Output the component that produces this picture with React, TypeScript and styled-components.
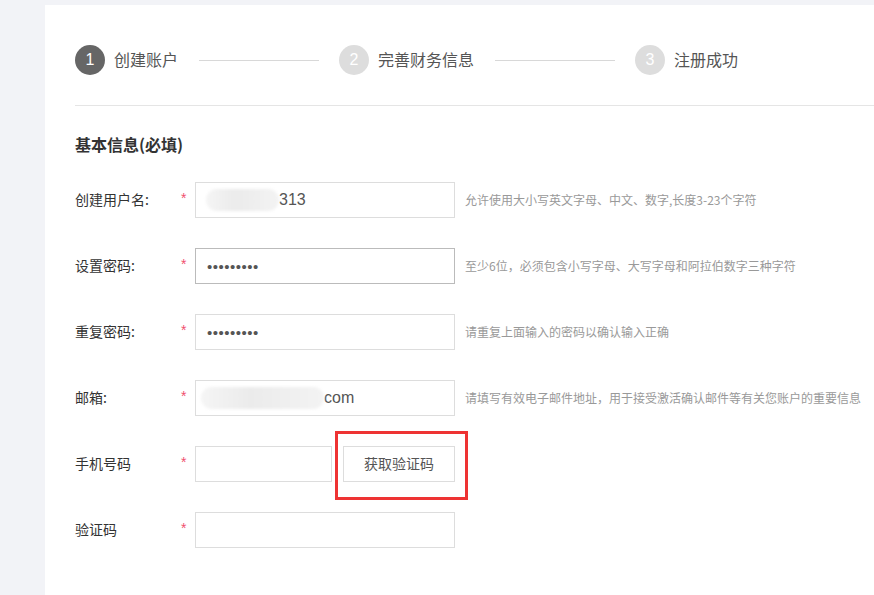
import React from "react";
import styled, { createGlobalStyle } from "styled-components";

const GlobalStyle = createGlobalStyle`
  html, body {
    margin: 0;
    padding: 0;
    background: #f2f3f7;
    font-family: "Liberation Sans", "Noto Sans CJK SC", sans-serif;
    overflow: hidden;
  }
`;

const Page = styled.div`
  width: 874px;
  height: 595px;
  padding: 5px 0 0 45px;
  box-sizing: border-box;
`;

const Panel = styled.div`
  background: #fff;
  height: 590px;
  padding: 40px 0 0 30px;
  box-sizing: border-box;
`;

const Steps = styled.div`
  display: flex;
  align-items: center;
  height: 30px;
`;

const Step = styled.div`
  display: flex;
  align-items: center;
  gap: 9px;
`;

const Circle = styled.span<{ $active?: boolean }>`
  width: 30px;
  height: 30px;
  border-radius: 50%;
  background: ${(p) => (p.$active ? "#666" : "#ddd")};
  color: #fff;
  font-size: 16px;
  display: flex;
  align-items: center;
  justify-content: center;
`;

const StepText = styled.span`
  font-size: 16px;
  color: #555;
  font-family: "Noto Sans CJK SC", sans-serif;
  line-height: 20px;
  margin-top: -2px;
`;

const StepLine = styled.span`
  width: 120px;
  height: 1px;
  background: #d8d8d8;
  margin: 0 20px 0 21px;
`;

const Divider = styled.div`
  height: 1px;
  background: #e5e5e5;
  margin-top: 30px;
`;

const Title = styled.h3`
  margin: 27px 0 0;
  font-size: 16px;
  font-weight: bold;
  color: #333;
  font-family: "Noto Sans CJK SC", sans-serif;
  line-height: 22px;
`;

const Form = styled.div`
  display: flex;
  flex-direction: column;
  gap: 30px;
  margin-top: 27px;
`;

const Row = styled.div`
  display: grid;
  grid-template-columns: 105px 15px max-content max-content;
  justify-content: start;
  align-items: center;
  height: 36px;
`;

const Label = styled.span`
  font-size: 14px;
  color: #333;
  font-family: "Noto Sans CJK SC", sans-serif;
  margin-top: -2px;
`;

const Star = styled.span`
  color: #f0506e;
  font-size: 14px;
  align-self: start;
  padding-top: 8px;
  padding-left: 1px;
`;

const Field = styled.div<{ $w?: number; $focus?: boolean }>`
  width: ${(p) => p.$w ?? 260}px;
  height: 36px;
  box-sizing: border-box;
  border: 1px solid ${(p) => (p.$focus ? "#bbb" : "#ddd")};
  display: flex;
  align-items: center;
  padding-left: 10px;
  font-size: 16px;
  color: #555;
`;

const Blur = styled.span<{ $w: number }>`
  width: ${(p) => p.$w}px;
  height: 22px;
  border-radius: 11px;
  background: linear-gradient(90deg, #f5f5f5, #ebebeb 40%, #efefef 70%, #f3f3f3);
  filter: blur(1.5px);
`;

const Dots = styled.span`
  letter-spacing: 0.5px;
  font-size: 15px;
  color: #555;
  padding-left: 1px;
  font-family: "Liberation Sans", sans-serif;
`;

const Hint = styled.span`
  margin-left: 10px;
  font-size: 12px;
  color: #999;
  white-space: nowrap;
  font-family: "Noto Sans CJK SC", sans-serif;
  margin-top: -2px;
`;

const PhoneBox = styled.div`
  display: flex;
  gap: 11px;
`;

const CodeWrap = styled.div`
  position: relative;
`;

const CodeButton = styled.button`
  width: 112px;
  height: 36px;
  background: #fff;
  border: 1px solid #ddd;
  font-size: 14px;
  color: #555;
  font-family: "Noto Sans CJK SC", sans-serif;
  padding: 0 0 2px;
`;

const Mark = styled.span`
  position: absolute;
  left: -8px;
  top: -15px;
  width: 133px;
  height: 69px;
  box-sizing: border-box;
  border: 3px solid #ee3333;
`;

const dots = "\u2022\u2022\u2022\u2022\u2022\u2022\u2022\u2022\u2022";

export default function App() {
  return (
    <>
      <GlobalStyle />
      <Page>
        <Panel>
          <Steps>
            <Step>
              <Circle $active>1</Circle>
              <StepText>创建账户</StepText>
            </Step>
            <StepLine />
            <Step>
              <Circle>2</Circle>
              <StepText>完善财务信息</StepText>
            </Step>
            <StepLine />
            <Step>
              <Circle>3</Circle>
              <StepText>注册成功</StepText>
            </Step>
          </Steps>
          <Divider />
          <Title>基本信息(必填)</Title>
          <Form>
            <Row>
              <Label>创建用户名:</Label>
              <Star>*</Star>
              <Field>
                <Blur $w={73} />
                313
              </Field>
              <Hint>允许使用大小写英文字母、中文、数字,长度3-23个字符</Hint>
            </Row>
            <Row>
              <Label>设置密码:</Label>
              <Star>*</Star>
              <Field $focus>
                <Dots>{dots}</Dots>
              </Field>
              <Hint>至少6位，必须包含小写字母、大写字母和阿拉伯数字三种字符</Hint>
            </Row>
            <Row>
              <Label>重复密码:</Label>
              <Star>*</Star>
              <Field>
                <Dots>{dots}</Dots>
              </Field>
              <Hint>请重复上面输入的密码以确认输入正确</Hint>
            </Row>
            <Row>
              <Label>邮箱:</Label>
              <Star>*</Star>
              <Field style={{ paddingLeft: 5 }}>
                <Blur $w={123} />
                com
              </Field>
              <Hint>请填写有效电子邮件地址，用于接受激活确认邮件等有关您账户的重要信息</Hint>
            </Row>
            <Row>
              <Label>手机号码</Label>
              <Star>*</Star>
              <PhoneBox>
                <Field $w={137} />
                <CodeWrap>
                  <CodeButton>获取验证码</CodeButton>
                  <Mark />
                </CodeWrap>
              </PhoneBox>
            </Row>
            <Row>
              <Label>验证码</Label>
              <Star>*</Star>
              <Field />
            </Row>
          </Form>
        </Panel>
      </Page>
    </>
  );
}
